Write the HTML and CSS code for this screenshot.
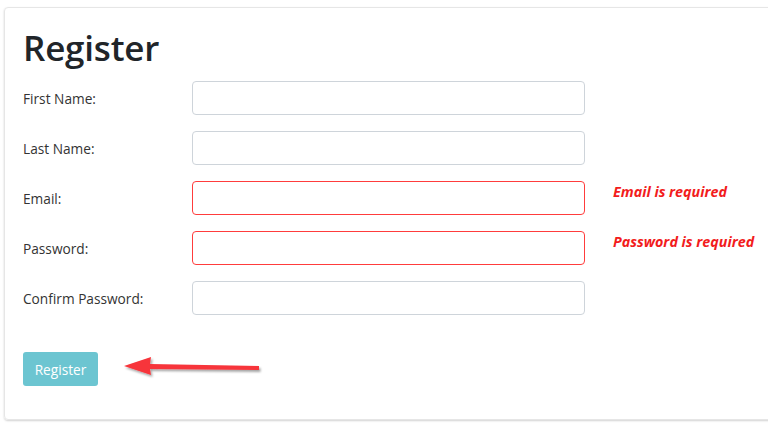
FILE: index.html
```html
<!DOCTYPE html>
<html>
<head>
<meta charset="utf-8">
<link rel="stylesheet" href="styles.css">
</head>
<body>
<div class="card">
  <h1 class="title">Register</h1>
  <form class="form">
    <div class="row">
      <label class="label">First Name:</label>
      <input class="input" type="text">
    </div>
    <div class="row">
      <label class="label">Last Name:</label>
      <input class="input" type="text">
    </div>
    <div class="row">
      <label class="label">Email:</label>
      <input class="input invalid" type="text">
      <span class="error">Email is required</span>
    </div>
    <div class="row">
      <label class="label">Password:</label>
      <input class="input invalid" type="password">
      <span class="error">Password is required</span>
    </div>
    <div class="row">
      <label class="label">Confirm Password:</label>
      <input class="input" type="password">
    </div>
    <div class="actions">
      <button class="btn" type="button">Register</button>
      <svg class="arrow" width="150" height="30" viewBox="0 0 150 30">
        <defs>
          <filter id="sh" x="-10%" y="-50%" width="130%" height="200%">
            <feDropShadow dx="1.5" dy="2" stdDeviation="1.2" flood-color="#000" flood-opacity="0.35"/>
          </filter>
        </defs>
        <g filter="url(#sh)">
          <path d="M1 13 L28 4 L27 11 L136 13 L136 17 L27 16 L28 22 Z" fill="#f7343a"/>
        </g>
      </svg>
    </div>
  </form>
</div>
</body>
</html>
```
FILE: styles.css
```css
html, body {
  margin: 0;
  padding: 0;
  background: #fff;
  overflow: hidden;
  width: 768px;
  height: 428px;
}
body {
  font-family: "Open Sans", "Noto Sans", sans-serif;
  color: #212529;
}
.card {
  margin: 7px 0 0 4px;
  width: 800px;
  height: 413px;
  border: 1px solid #e6e6e6;
  border-radius: 4px;
  box-shadow: 0 1px 2px rgba(0,0,0,0.18);
  box-sizing: border-box;
  padding: 0 0 0 18px;
  position: relative;
}
.title {
  margin: 0;
  padding-top: 19px;
  font-size: 35px;
  font-weight: 600;
  line-height: 42px;
  letter-spacing: -0.2px;
}
.form {
  margin-top: 12px;
  display: flex;
  flex-direction: column;
  gap: 16px;
}
.row {
  display: grid;
  grid-template-columns: 169px 393px auto;
  align-items: center;
  height: 34px;
}
.label {
  font-size: 13.7px;
  color: #333;
}
.input {
  box-sizing: border-box;
  width: 393px;
  height: 34px;
  border: 1px solid #ced4da;
  border-radius: 4px;
  background: #fff;
  margin: 0;
  padding: 0 10px;
}
.input.invalid {
  border-color: #ff3c3c;
}
.error {
  margin-left: 28px;
  color: #f21c1c;
  font-weight: 700;
  font-style: italic;
  font-size: 14.3px;
  margin-top: -14px;
  white-space: nowrap;
}
.actions {
  margin-top: 21px;
  display: flex;
  align-items: center;
  position: relative;
}
.btn {
  height: 34px;
  width: 75px;
  border: none;
  border-radius: 3px;
  background: #6cc5d1;
  color: #fff;
  font-family: "Open Sans", "Noto Sans", sans-serif;
  font-size: 13.7px;
  padding: 0;
}
.arrow {
  position: absolute;
  left: 100px;
  top: 1px;
}
```
